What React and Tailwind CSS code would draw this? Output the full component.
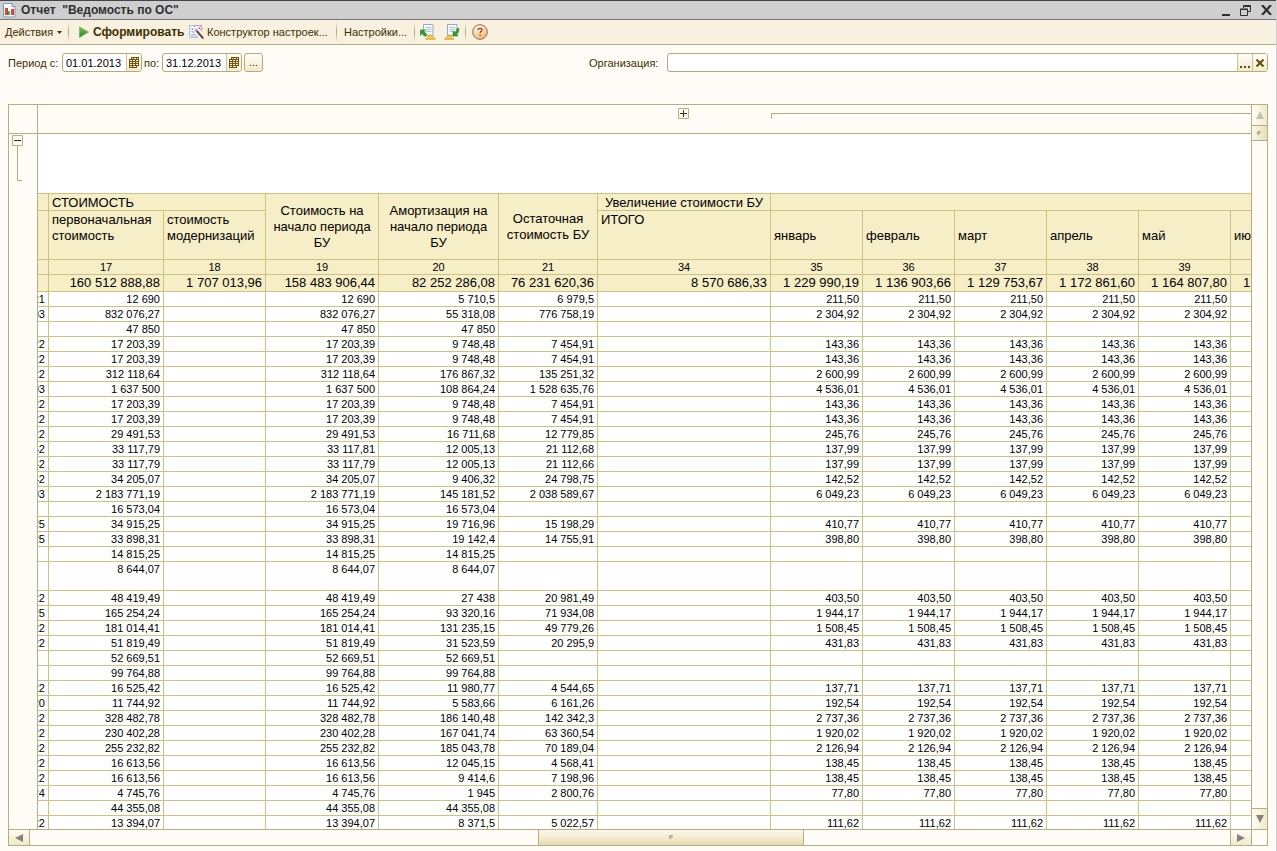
import React from "react";

const COLUMNS = [
  "w-[11px]",
  "w-[115px]",
  "w-[102px]",
  "w-[113px]",
  "w-[120px]",
  "w-[99px]",
  "w-[173px]",
  "w-[92px]",
  "w-[92px]",
  "w-[92px]",
  "w-[92px]",
  "w-[92px]",
];

const MONTHS = ["январь", "февраль", "март", "апрель", "май"];
const NUMBERS = ["17", "18", "19", "20", "21", "34", "35", "36", "37", "38", "39"];
const TOTALS = [
  "160 512 888,88",
  "1 707 013,96",
  "158 483 906,44",
  "82 252 286,08",
  "76 231 620,36",
  "8 570 686,33",
  "1 229 990,19",
  "1 136 903,66",
  "1 129 753,67",
  "1 172 861,60",
  "1 164 807,80",
];

// code, initial cost, cost at start of period, depreciation, residual value, monthly amount
const ROWS = [
  ["21", "12 690", "12 690", "5 710,5", "6 979,5", "211,50"],
  ["03", "832 076,27", "832 076,27", "55 318,08", "776 758,19", "2 304,92"],
  ["", "47 850", "47 850", "47 850", "", ""],
  ["22", "17 203,39", "17 203,39", "9 748,48", "7 454,91", "143,36"],
  ["22", "17 203,39", "17 203,39", "9 748,48", "7 454,91", "143,36"],
  ["22", "312 118,64", "312 118,64", "176 867,32", "135 251,32", "2 600,99"],
  ["03", "1 637 500", "1 637 500", "108 864,24", "1 528 635,76", "4 536,01"],
  ["22", "17 203,39", "17 203,39", "9 748,48", "7 454,91", "143,36"],
  ["22", "17 203,39", "17 203,39", "9 748,48", "7 454,91", "143,36"],
  ["22", "29 491,53", "29 491,53", "16 711,68", "12 779,85", "245,76"],
  ["42", "33 117,79", "33 117,81", "12 005,13", "21 112,68", "137,99"],
  ["42", "33 117,79", "33 117,79", "12 005,13", "21 112,66", "137,99"],
  ["42", "34 205,07", "34 205,07", "9 406,32", "24 798,75", "142,52"],
  ["03", "2 183 771,19", "2 183 771,19", "145 181,52", "2 038 589,67", "6 049,23"],
  ["", "16 573,04", "16 573,04", "16 573,04", "", ""],
  ["25", "34 915,25", "34 915,25", "19 716,96", "15 198,29", "410,77"],
  ["25", "33 898,31", "33 898,31", "19 142,4", "14 755,91", "398,80"],
  ["", "14 815,25", "14 815,25", "14 815,25", "", ""],
  ["", "8 644,07", "8 644,07", "8 644,07", "", ""],
  ["22", "48 419,49", "48 419,49", "27 438", "20 981,49", "403,50"],
  ["25", "165 254,24", "165 254,24", "93 320,16", "71 934,08", "1 944,17"],
  ["22", "181 014,41", "181 014,41", "131 235,15", "49 779,26", "1 508,45"],
  ["22", "51 819,49", "51 819,49", "31 523,59", "20 295,9", "431,83"],
  ["", "52 669,51", "52 669,51", "52 669,51", "", ""],
  ["", "99 764,88", "99 764,88", "99 764,88", "", ""],
  ["22", "16 525,42", "16 525,42", "11 980,77", "4 544,65", "137,71"],
  ["20", "11 744,92", "11 744,92", "5 583,66", "6 161,26", "192,54"],
  ["22", "328 482,78", "328 482,78", "186 140,48", "142 342,3", "2 737,36"],
  ["22", "230 402,28", "230 402,28", "167 041,74", "63 360,54", "1 920,02"],
  ["22", "255 232,82", "255 232,82", "185 043,78", "70 189,04", "2 126,94"],
  ["22", "16 613,56", "16 613,56", "12 045,15", "4 568,41", "138,45"],
  ["22", "16 613,56", "16 613,56", "9 414,6", "7 198,96", "138,45"],
  ["24", "4 745,76", "4 745,76", "1 945", "2 800,76", "77,80"],
  ["", "44 355,08", "44 355,08", "44 355,08", "", ""],
  ["22", "13 394,07", "13 394,07", "8 371,5", "5 022,57", "111,62"],
];

const TALL_ROW = 18;

function ReportIcon() {
  return (
    <svg width="13" height="15" viewBox="0 0 13 15" className="shrink-0">
      <path d="M.5 .5h8.500l3 3v10.500h-11.500z" fill="#f7fbff" stroke="#7f97b0" />
      <path d="M9 .5v3h3" fill="#cfdcea" stroke="#7f97b0" />
      <path d="M2 5h2.500v7H2z" fill="#e2453a" />
      <path d="M5 8h2v4H5z" fill="#43b13d" />
      <path d="M8 6h2.500v6H8z" fill="#e2453a" />
      <path d="M4 5h.8v7H4zM10 6h.8v6H10z" fill="#a32a22" />
    </svg>
  );
}

function WandIcon() {
  return (
    <svg width="16" height="16" viewBox="0 0 16 16" className="shrink-0">
      <path d="M1 1.500h12v12H1z" fill="#f3f8fd" />
      <path d="M.5 1v12.500M1 1.500h11.500M12.500 1.500v6M1 13.500h8" stroke="#a9c2da" fill="none" />
      <path d="M2 4.500h2M2 7.500h3M2 10.500h5M2 12h7" stroke="#a6bdd6" />
      <path d="M6.500 5.500l7.500 8.500" stroke="#8a5d48" strokeWidth="2.200" />
      <path d="M7 6.500l7.500 8.500" stroke="#443736" strokeWidth="1" />
      <path d="M6 4.800l2 2.200" stroke="#8fb6e8" strokeWidth="2" />
      <path d="M5 2h1v1H5zM8 1h1v1H8zM3 5h1v1H3zM10 4h1v1h-1zM4 8h1v1H4zM9 7h1v1H9z" fill="#ec4f47" />
      <path d="M9 4.500l4-3.500M11 5.500l3-1" stroke="#ef8a80" />
    </svg>
  );
}

function SheetArrowIcon({ out }) {
  return (
    <svg width="16" height="16" viewBox="0 0 16 16" className="shrink-0">
      <path d="M3.500 .5h9.500v11H3.500z" fill="#f6faff" stroke="#8fabc6" />
      <path d="M5.500 3.500h6M5.500 5.500h6M5.500 7.500h6" stroke="#b0c4da" />
      {out ? (
        <path d="M0 6h5.500L4 7.500l3 3-2 2-3-3L.5 11.500z" fill="#3a9a2b" stroke="#1f7315" strokeWidth=".5" />
      ) : (
        <path d="M9 12V7l1.500 1.500C12 7.500 13 6 13 4.500h2c0 2.500-.8 4.500-2.500 6L14 12z" fill="#3a9a2b" stroke="#1f7315" strokeWidth=".5" />
      )}
      {out ? (
        <path d="M5.500 15.300l5-5 5 5z" fill="#f3c944" stroke="#c9952a" strokeWidth=".7" />
      ) : (
        <path d="M.5 15.300l4.500-5 5 5z" fill="#f3c944" stroke="#c9952a" strokeWidth=".7" />
      )}
    </svg>
  );
}

function HelpIcon() {
  return (
    <svg width="16" height="16" viewBox="0 0 16 16" className="shrink-0">
      <defs>
        <radialGradient id="help" cx=".4" cy=".3" r=".8">
          <stop offset="0" stopColor="#fff3df" />
          <stop offset=".6" stopColor="#fbcb92" />
          <stop offset="1" stopColor="#f0a055" />
        </radialGradient>
      </defs>
      <circle cx="8" cy="8" r="7.400" fill="url(#help)" stroke="#8c7c74" />
      <path d="M6 6.200c0-2.400 4.100-2.300 4-.2-.1 1.300-1.900 1.400-1.900 3M8.100 10.500v1.500" fill="none" stroke="#6d4a38" strokeWidth="1.300" />
    </svg>
  );
}

function CalendarIcon() {
  return (
    <svg width="10" height="11" viewBox="0 0 10 11">
      <path d="M2 0h8v9H8v2H0V2h2z" fill="#6b5310" />
      <path d="M3 1h1v1H3zM5 1h2v1H5zM8 1h1v1H8zM1 3h2v1H1zM4 3h2v1H4zM7 3h2v1H7zM1 5h2v1H1zM4 5h2v1H4zM7 5h2v1H7zM1 7h2v1H1zM4 7h2v1H4zM7 7h2v1H7zM1 9h2v1H1zM4 9h3v1H4z" fill="#f8f2d4" />
    </svg>
  );
}

function Arrow({ d, faint }) {
  return (
    <svg width="8" height="8" viewBox="0 0 8 8">
      <path d={d} fill={faint ? "#c4c1b6" : "#85837c"} />
    </svg>
  );
}

function Grip() {
  return (
    <svg width="5" height="5" viewBox="0 0 5 5">
      <circle cx="2.500" cy="2.500" r="2.500" fill="#d9d2b0" />
      <path d="M0 4V2Q0 0 2 0h2L0 4" fill="#aaa486" />
      <path d="M5 2v1q0 2-2 2H2z" fill="#fffdf0" />
    </svg>
  );
}

function Separator() {
  return <div className="h-5 w-px shrink-0 bg-linear-to-b from-[#f8f1df] via-[#a9a57a] to-[#f8f1df]" />;
}

function DateField({ id, label, value, labelClass }) {
  return (
    <div className="flex items-center">
      <label htmlFor={id} className={labelClass}>{label}</label>
      <div className="flex h-[19px] w-20 overflow-hidden rounded-[3px] border border-[#b3ab7e] bg-white">
        <input id={id} defaultValue={value} className="w-[63px] pt-px pl-[3px] text-[11px] text-black outline-none" />
        <button type="button" aria-label="Календарь" className="flex flex-1 items-center justify-center border-l border-[#c9c39a] bg-linear-to-b from-[#fffdf5] to-[#f1ebcd]">
          <CalendarIcon />
        </button>
      </div>
    </div>
  );
}

function Th({ className, children, ...rest }) {
  return (
    <th {...rest} className={`border-b border-[#cdc27f] font-normal not-last:border-r ${className}`}>
      {children}
    </th>
  );
}

function Td({ className, children }) {
  return <td className={`border-b border-[#cdc27f] p-0 text-right whitespace-nowrap not-last:border-r ${className}`}>{children}</td>;
}

function DataRow({ row, tall }) {
  const [code, cost, start, amort, rest, month] = row;
  const cells = [cost, "", start, amort, rest, "", month, month, month, month, month];
  return (
    <tr className={tall ? "h-[29px] align-top" : "h-[15px] align-middle"}>
      <Td className="pr-[3px]">
        <div className="flex justify-end">{code}</div>
      </Td>
      {cells.map((value, i) => (
        <Td key={i} className="pr-[3px]">{value}</Td>
      ))}
      <Td className="" />
    </tr>
  );
}

function Report() {
  return (
    <table className="w-full min-w-[1213px] table-fixed border-separate border-spacing-0 text-[11px] leading-[14px] text-black">
      <colgroup>
        {COLUMNS.map((width, i) => (
          <col key={i} className={width} />
        ))}
        <col />
      </colgroup>
      <thead className="bg-[#f6eec6] text-[13px] leading-4">
        <tr className="h-[18px] leading-[15px]">
          <Th className="border-t" />
          <Th colSpan={2} className="border-t pt-px pl-[3px] text-left">СТОИМОСТЬ</Th>
          <Th rowSpan={2} className="border-t leading-4">Стоимость на<br />начало периода<br />БУ</Th>
          <Th rowSpan={2} className="border-t leading-4">Амортизация на<br />начало периода<br />БУ</Th>
          <Th rowSpan={2} className="border-t leading-4">Остаточная<br />стоимость БУ</Th>
          <Th className="border-t pt-px whitespace-nowrap">Увеличение стоимости БУ</Th>
          <Th colSpan={6} className="border-t" />
        </tr>
        <tr className="h-[49px]">
          <Th className="" />
          <Th className="pt-px pl-[3px] text-left align-top">первоначальная<br />стоимость</Th>
          <Th className="pt-px pl-[3px] text-left align-top">стоимость<br />модернизаций</Th>
          <Th className="pt-px pl-[3px] text-left align-top">ИТОГО</Th>
          {MONTHS.map((month) => (
            <Th key={month} className="pt-[2px] pl-[3px] text-left">{month}</Th>
          ))}
          <Th className="pt-[2px] pl-[3px] text-left">июнь</Th>
        </tr>
        <tr className="h-[15px] text-[11px] leading-[14px]">
          <Th className="" />
          {NUMBERS.map((n) => (
            <Th key={n} className="">{n}</Th>
          ))}
          <Th className="" />
        </tr>
        <tr className="h-[17px]">
          <Th className="" />
          {TOTALS.map((total) => (
            <Th key={total} className="pr-[3px] text-right whitespace-nowrap">{total}</Th>
          ))}
          <Th className="pl-3 text-left">1</Th>
        </tr>
      </thead>
      <tbody className="bg-white">
        {ROWS.map((row, i) => (
          <DataRow key={i} row={row} tall={i === TALL_ROW} />
        ))}
      </tbody>
    </table>
  );
}

export default function App() {
  return (
    <div className="flex h-screen flex-col overflow-hidden border-r border-[#cfcfcf] bg-[#fffcf7] font-['Liberation_Sans',Arial,sans-serif] text-[12px] text-[#3f2f00]">
      <header className="flex h-5 shrink-0 items-center border-t border-b border-t-[#444] border-b-[#77757a] bg-[#cfcfcf] pl-[3px] text-[#2f2f2f]">
        <ReportIcon />
        <h1 className="flex-1 pl-[5px] text-[12px] font-bold whitespace-pre">Отчет  "Ведомость по ОС"</h1>
        <div className="flex items-center gap-[10px] pr-1">
          <button aria-label="Свернуть">
            <svg width="8" height="12" viewBox="0 0 8 12"><path d="M0 10h8v2H0z" fill="#2f2f2f" /></svg>
          </button>
          <button aria-label="Восстановить">
            <svg width="11" height="11" viewBox="0 0 11 11" fill="none" stroke="#2f2f2f">
              <path d="M3.500 3V.5h7v6H8M3 1.500h8M.5 4.500h7v6h-7zM0 4h8" />
            </svg>
          </button>
          <button aria-label="Закрыть">
            <svg width="11" height="10" viewBox="0 0 11 10"><path d="M1 0l9 10M10 0L1 10" stroke="#2f2f2f" strokeWidth="2.200" /></svg>
          </button>
        </div>
      </header>

      <nav className="flex h-[25px] shrink-0 items-center border-b border-[#b5ae7e] bg-[#f8f1df] pl-[5px] whitespace-nowrap">
        <button className="flex w-[63px] items-center gap-1 text-[11px]">
          Действия
          <svg width="5" height="3" viewBox="0 0 5 3"><path d="M0 0h5L2.500 3z" fill="#3f2f00" /></svg>
        </button>
        <Separator />
        <button className="ml-[10px] flex w-[110px] items-center gap-1 text-[12px] font-bold">
          <svg width="10" height="12" viewBox="0 0 10 12" className="shrink-0">
            <defs>
              <linearGradient id="play" x1="0" y1="0" x2="0" y2="1">
                <stop offset="0" stopColor="#7cc25a" />
                <stop offset="1" stopColor="#238a18" />
              </linearGradient>
            </defs>
            <path d="M.5 1v10.500L9.500 6z" fill="url(#play)" stroke="#6f9c66" strokeWidth=".6" />
          </svg>
          Сформировать
        </button>
        <button className="flex w-[147px] items-center gap-[2px] text-[11px]">
          <WandIcon />
          Конструктор настроек...
        </button>
        <Separator />
        <button className="w-[77px] pl-[7px] text-left text-[11px]">Настройки...</button>
        <Separator />
        <button aria-label="Сохранить настройки" className="ml-[5px]"><SheetArrowIcon out /></button>
        <button aria-label="Загрузить настройки" className="mr-[5px] ml-2"><SheetArrowIcon /></button>
        <Separator />
        <button aria-label="Справка" className="ml-[6px]"><HelpIcon /></button>
      </nav>

      <main className="flex min-h-0 flex-1 flex-col pt-2 pr-2 pb-[5px] pl-2 text-[11px]">
        <form className="mb-8 flex items-center">
          <DateField id="from" label="Период с:" value="01.01.2013" labelClass="w-[54px] pt-px" />
          <DateField id="to" label="по:" value="31.12.2013" labelClass="w-5 pt-px pl-[2px]" />
          <button type="button" className="ml-[2px] h-[19px] w-[19px] rounded-[3px] border border-[#b3ab7e] bg-linear-to-b from-[#fffdf5] to-[#f1ebcd] leading-[17px]">...</button>
          <label htmlFor="org" className="ml-[326px] w-[78px] pt-px">Организация:</label>
          <div className="flex h-[19px] flex-1 overflow-hidden rounded-[3px] border border-[#b3ab7e] bg-white">
            <input id="org" className="min-w-0 flex-1 px-1 text-black outline-none" />
            <button type="button" aria-label="Выбрать" className="flex w-[15px] items-end justify-center border-l border-[#c9c39a] bg-linear-to-b from-[#fffdf5] to-[#f1ebcd] pb-[3px]">
              <svg width="10" height="2" viewBox="0 0 10 2"><path d="M0 0h2v2H0zM4 0h2v2H4zM8 0h2v2H8z" fill="#634d06" /></svg>
            </button>
            <button type="button" aria-label="Очистить" className="flex w-[15px] items-center justify-center border-l border-[#c9c39a] bg-linear-to-b from-[#fffdf5] to-[#f1ebcd]">
              <svg width="8" height="8" viewBox="0 0 8 8"><path d="M.5 .5l7 7M7.500 .5l-7 7" stroke="#634d06" strokeWidth="2" /></svg>
            </button>
          </div>
        </form>

        <section className="flex min-h-0 flex-1 flex-col border border-[#b5ae7e]">
          <div className="flex min-h-0 flex-1">
            <div className="flex min-w-0 flex-1 flex-col">
              <div className="flex h-[29px] shrink-0 border-b border-[#b5ae7e]">
                <div className="w-[29px] shrink-0 border-r border-[#b5ae7e]" />
                <div className="w-[733px] shrink-0 pt-[3px] pl-[640px]">
                  <button aria-label="Развернуть группу" className="block">
                    <svg width="11" height="11" viewBox="0 0 11 11"><path d="M.5 .5h10v10H.5z" fill="#fffdf5" stroke="#b5ae7e" /><path d="M2 5.500h7M5.500 2v7" stroke="#3f2f00" /></svg>
                  </button>
                </div>
                <div className="mt-2 h-[6px] flex-1 border-t border-l border-[#b5ae7e]" />
              </div>
              <div className="flex min-h-0 flex-1">
                <div className="w-[29px] shrink-0 border-r border-[#b5ae7e] pt-px pl-[3px]">
                  <button aria-label="Свернуть группу" className="block">
                    <svg width="11" height="11" viewBox="0 0 11 11"><path d="M.5 .5h10v10H.5z" fill="#fffdf5" stroke="#b5ae7e" /><path d="M2 5.500h7" stroke="#3f2f00" /></svg>
                  </button>
                  <div className="ml-[5px] h-[35px] w-[5px] border-b border-l border-[#b5ae7e]" />
                </div>
                <div className="min-w-0 flex-1 overflow-hidden bg-white pt-[59px]">
                  <Report />
                </div>
              </div>
            </div>
            <div className="flex w-4 shrink-0 flex-col border-l border-[#b5ae7e]">
              <button aria-label="Вверх" className="flex h-[21px] items-center justify-center border-b border-[#b5ae7e] bg-linear-to-r from-[#fffdf5] to-[#efe9cb]"><Arrow faint d="M4 0l4 8H0z" /></button>
              <div className="flex h-[15px] items-center justify-center border-b border-[#b5ae7e] bg-linear-to-r from-[#fbf8e8] to-[#e6dfb6]"><Grip /></div>
              <div className="flex-1" />
              <button aria-label="Вниз" className="flex h-[21px] items-center justify-center border-t border-[#b5ae7e] bg-linear-to-r from-[#fffdf5] to-[#efe9cb]"><Arrow d="M0 0h8L4 8z" /></button>
            </div>
          </div>
          <div className="flex h-4 shrink-0 border-t border-[#b5ae7e]">
            <button aria-label="Влево" className="flex w-[21px] items-center justify-center border-r border-[#b5ae7e] bg-linear-to-b from-[#fffdf5] to-[#efe9cb]"><Arrow d="M8 0v8L0 4z" /></button>
            <div className="flex-[508]" />
            <div className="flex w-[266px] items-center justify-center border-r border-l border-[#b5ae7e] bg-linear-to-b from-[#fbf8ee] via-[#f3edcf] to-[#e2dab0]"><Grip /></div>
            <div className="flex-[426]" />
            <button aria-label="Вправо" className="flex w-[22px] items-center justify-center border-r border-l border-[#b5ae7e] bg-linear-to-b from-[#fffdf5] to-[#efe9cb]"><Arrow d="M0 0l8 4-8 4z" /></button>
            <div className="w-[15px]" />
          </div>
        </section>
      </main>
    </div>
  );
}
